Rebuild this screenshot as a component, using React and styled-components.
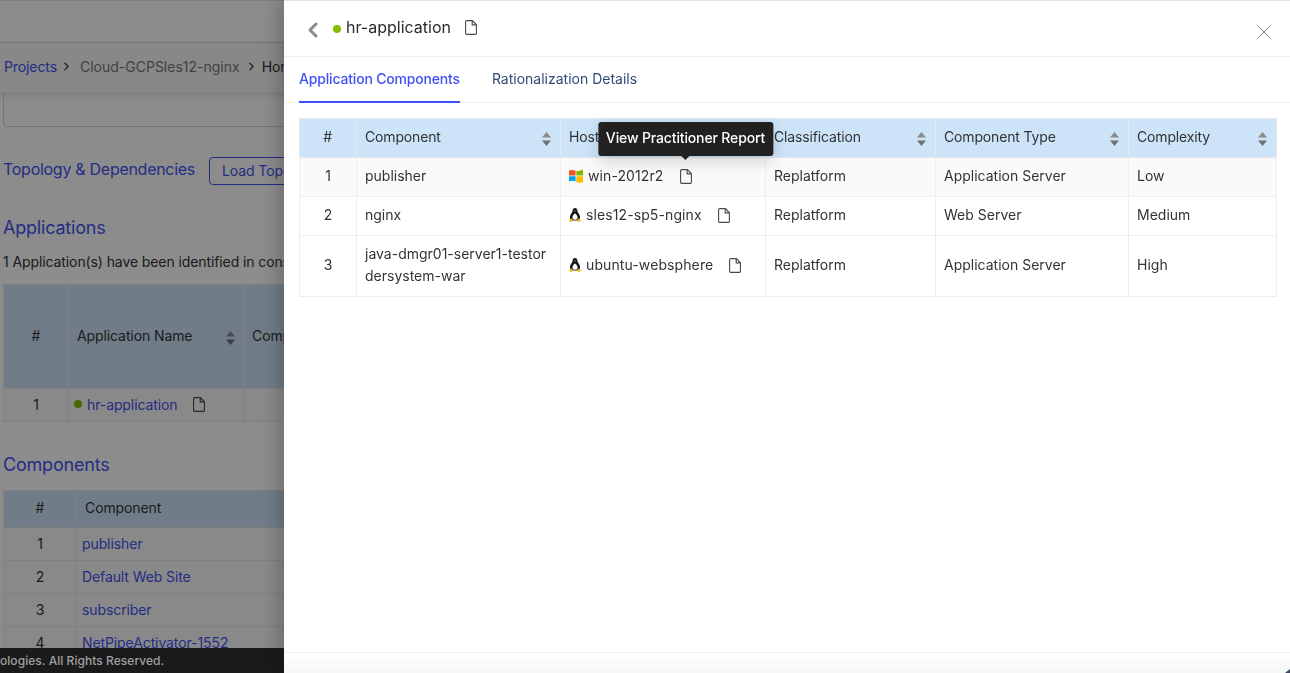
import styled, { createGlobalStyle } from "styled-components";
import { X, ChevronLeft, ChevronRight } from "lucide-react";

const GlobalStyle = createGlobalStyle`
    html, body {
        margin: 0;
        padding: 0;
        height: 100%;
        overflow: hidden;
        background: #ffffff;
        font-family: Inter, "Liberation Sans", sans-serif;
        font-size: 14px;
        color: #333333;
    }
    * {
        box-sizing: border-box;
    }
`;

const hosts = [
    { id: 1, name: "publisher", host: "win-2012r2", os: "windows", type: "Application Server", level: "Low" },
    { id: 2, name: "nginx", host: "sles12-sp5-nginx", os: "linux", type: "Web Server", level: "Medium" },
    { id: 3, name: "java-dmgr01-server1-testordersystem-war", host: "ubuntu-websphere", os: "linux", type: "Application Server", level: "High" },
];

const FileIcon = () => (
    <svg width="12" height="15" viewBox="0 0 12 15" fill="none" stroke="#4a4a4a" strokeWidth="1.1">
        <path d="M1.8 .6h5.6l4 4.2v8.4a1.2 1.2 0 0 1-1.2 1.2H1.8a1.2 1.2 0 0 1-1.2-1.2V1.8A1.2 1.2 0 0 1 1.8 .6z" />
        <path d="M7.2 .8v4.1h4" />
    </svg>
);

const SortIcon = () => (
    <SortWrap width="9" height="14" viewBox="0 0 9 14">
        <path d="M4.5 0L9 5.5H0z" fill="#8a8a8a" />
        <path d="M4.5 14L0 8.5h9z" fill="#6e6e6e" />
    </SortWrap>
);

const WindowsIcon = () => (
    <svg width="14" height="14" viewBox="0 0 14 14">
        <path d="M0 1.6C2 .9 4.400 .9 6.600 1.700V6.500H0z" fill="#f25022" />
        <path d="M7.300 1.700C9.400 2.300 11.800 2 14 .6V6.500H7.300z" fill="#7fba00" />
        <path d="M0 7.200H6.600V12.300C4.400 11.500 2 11.500 0 12.200z" fill="#00a4ef" />
        <path d="M7.300 7.200H14V13.200C11.800 13.900 9.400 13.900 7.300 12.900z" fill="#ffb900" />
    </svg>
);

const TuxIcon = () => (
    <svg width="12" height="14" viewBox="0 0 12 14">
        <path d="M6 0C4.300 0 3.500 1.400 3.600 3C3.700 4.300 1.400 6 1 8.400C.8 10 1.400 11.800 2.600 12.600H9.400C10.600 11.800 11.200 10 11 8.400C10.600 6 8.300 4.300 8.400 3C8.500 1.400 7.700 0 6 0z" fill="#161616" />
        <path d="M6 5.400C4.900 5.400 3.400 7.800 3.400 9.400C3.400 10.900 4.500 11.800 6 11.800C7.500 11.800 8.600 10.900 8.600 9.400C8.600 7.800 7.100 5.400 6 5.400z" fill="#fafafa" />
        <path d="M5 2.900L6 2.400L7 2.900L6 3.600z" fill="#f0b429" />
        <path d="M.3 11.400L2.500 10.400L4.400 12.800L2.400 14L.6 13.400z" fill="#f2b91d" />
        <path d="M11.700 11.400L9.500 10.400L7.600 12.800L9.600 14L11.400 13.400z" fill="#f2b91d" />
    </svg>
);

const App = () => {
    return (
        <Screen>
            <GlobalStyle />
            <Page>
                <TopBar />
                <Breadcrumb>
                    <CrumbLink>Projects</CrumbLink>
                    <ChevronRight size={13} strokeWidth={3} color="#555" />
                    <Crumb>Cloud-GCPSles12-nginx</Crumb>
                    <ChevronRight size={13} strokeWidth={3} color="#555" />
                    <CrumbCurrent>Home</CrumbCurrent>
                </Breadcrumb>
                <Content>
                    <EmptyCard />
                    <TopologyRow>
                        <SubTitle>Topology &amp; Dependencies</SubTitle>
                        <OutlineButton>Load Topology</OutlineButton>
                    </TopologyRow>
                    <SectionTitle>Applications</SectionTitle>
                    <Intro>1 Application(s) have been identified in cons</Intro>
                    <BackTable $width={440}>
                        <colgroup>
                            <col width="65" />
                            <col width="175" />
                            <col width="200" />
                        </colgroup>
                        <thead>
                            <tr>
                                <BackHead $height={104} $center>#</BackHead>
                                <BackHead $height={104}>
                                    <HeadInner>Application Name <SortIcon /></HeadInner>
                                </BackHead>
                                <BackHead $height={104}>Components</BackHead>
                            </tr>
                        </thead>
                        <tbody>
                            <tr>
                                <BackCell $center>1</BackCell>
                                <BackCell>
                                    <NameLine>
                                        <Dot />
                                        <BackLink>hr-application</BackLink>
                                        <FileIcon />
                                    </NameLine>
                                </BackCell>
                                <BackCell />
                            </tr>
                        </tbody>
                    </BackTable>
                    <ComponentsTitle>Components</ComponentsTitle>
                    <BackTable $width={473}>
                        <colgroup>
                            <col width="73" />
                            <col width="400" />
                        </colgroup>
                        <thead>
                            <tr>
                                <BackHead $height={37} $center>#</BackHead>
                                <BackHead $height={37}>Component</BackHead>
                            </tr>
                        </thead>
                        <tbody>
                            {["publisher", "Default Web Site", "subscriber", "NetPipeActivator-1552"].map((item, index) => (
                                <tr key={item}>
                                    <BackCell $center>{index + 1}</BackCell>
                                    <BackCell><BackLink>{item}</BackLink></BackCell>
                                </tr>
                            ))}
                        </tbody>
                    </BackTable>
                </Content>
            </Page>
            <Scrim />
            <Footer>
                <FooterText>ologies. All Rights Reserved.</FooterText>
            </Footer>
            <Drawer>
                <DrawerHeader>
                    <TitleGroup>
                        <BackArrow><ChevronLeft size={24} strokeWidth={3} color="#8a8a8a" /></BackArrow>
                        <TitleDot />
                        <DrawerTitle>hr-application</DrawerTitle>
                        <TitleFile><FileIcon /></TitleFile>
                    </TitleGroup>
                    <CloseButton><X size={24} strokeWidth={1} color="#808080" /></CloseButton>
                </DrawerHeader>
                <Tabs>
                    <Tab $active>Application Components</Tab>
                    <Tab>Rationalization Details</Tab>
                </Tabs>
                <DrawerBody>
                    <HostTable>
                        <colgroup>
                            <col width="57" />
                            <col width="204" />
                            <col width="205" />
                            <col width="170" />
                            <col width="193" />
                            <col width="148" />
                        </colgroup>
                        <thead>
                            <tr>
                                <Head $center>#</Head>
                                <Head><HeadInner>Component <SortIcon /></HeadInner></Head>
                                <Head><HeadInner>Host <SortIcon /></HeadInner></Head>
                                <Head><HeadInner>Classification <SortIcon /></HeadInner></Head>
                                <Head><HeadInner>Component Type <SortIcon /></HeadInner></Head>
                                <Head><HeadInner>Complexity <SortIcon /></HeadInner></Head>
                            </tr>
                        </thead>
                        <tbody>
                            {hosts.map((row) => (
                                <Row key={row.id} $hover={row.id === 1}>
                                    <Cell $center>{row.id}</Cell>
                                    <Cell>{row.name}</Cell>
                                    <Cell>
                                        <HostLine>
                                            {row.os === "windows" ? <WindowsIcon /> : <TuxIcon />}
                                            <HostName>{row.host}</HostName>
                                            <ReportButton>
                                                <FileIcon />
                                                {row.id === 1 && (
                                                    <Tooltip>View Practitioner Report</Tooltip>
                                                )}
                                            </ReportButton>
                                        </HostLine>
                                    </Cell>
                                    <Cell>Replatform</Cell>
                                    <Cell>{row.type}</Cell>
                                    <Cell>{row.level}</Cell>
                                </Row>
                            ))}
                        </tbody>
                    </HostTable>
                </DrawerBody>
                <DrawerFooter />
            </Drawer>
        </Screen>
    );
};

export default App;

const Screen = styled.div`
    position: relative;
    width: 1290px;
    height: 673px;
    overflow: hidden;
`;

const Page = styled.div`
    width: 1290px;
    height: 673px;
    overflow: hidden;
    background: #ffffff;
    letter-spacing: -0.1px;
`;

const TopBar = styled.div`
    height: 43px;
    border-top: 1px solid #e4e4e4;
    border-bottom: 1px solid #dcdcdc;
    background: #ffffff;
`;

const Breadcrumb = styled.div`
    height: 49px;
    padding: 0 0 2px 4px;
    display: flex;
    align-items: center;
    gap: 3px;
    white-space: nowrap;
    background: #f7f7f7;
    box-shadow: 0 3px 8px rgba(0, 0, 0, 0.12);
    position: relative;
`;

const CrumbLink = styled.span`
    color: #4353f0;
`;

const Crumb = styled.span`
    color: #777777;
    letter-spacing: 0;
    margin: 0 2px 0 4px;
`;

const CrumbCurrent = styled.span`
    color: #333333;
    margin-left: 1px;
`;

const Content = styled.div`
    width: 284px;
    padding: 0 0 0 3px;
    overflow: hidden;
`;

const EmptyCard = styled.div`
    height: 35px;
    width: 400px;
    border: 1px solid #d6d6d6;
    border-top: none;
    border-radius: 0 0 4px 4px;
`;

const TopologyRow = styled.div`
    margin-top: 30px;
    display: flex;
    align-items: center;
    gap: 14px;
    height: 28px;
    width: 400px;
`;

const SubTitle = styled.div`
    font-size: 16px;
    letter-spacing: -0.28px;
    margin-bottom: 5px;
    color: #4353f0;
`;

const OutlineButton = styled.div`
    height: 28px;
    padding: 0 12px 2px;
    display: flex;
    align-items: center;
    white-space: nowrap;
    border: 1px solid #4353f0;
    border-radius: 4px;
    color: #4353f0;
`;

const SectionTitle = styled.div`
    margin-top: 31px;
    height: 24px;
    line-height: 24px;
    font-size: 18px;
    letter-spacing: -0.2px;
    color: #4353f0;
`;

const ComponentsTitle = styled(SectionTitle)`
    margin-top: 31px;
    margin-bottom: 13px;
`;

const Intro = styled.div`
    margin-top: 13px;
    margin-bottom: 13px;
    height: 18px;
    line-height: 18px;
    white-space: nowrap;
    color: #333333;
`;

const BackTable = styled.table`
    width: ${(props) => props.$width}px;
    border-collapse: collapse;
    table-layout: fixed;
`;

const BackHead = styled.th`
    height: ${(props) => props.$height}px;
    padding: 0 8px 3px;
    font-weight: 400;
    background: #cce3f8;
    border: 1px solid #e8e8e8;
    text-align: ${(props) => (props.$center ? "center" : "left")};
    color: #333333;
`;

const BackCell = styled.td`
    height: 33px;
    padding: 0 5px 2px;
    background: #fafafa;
    border: 1px solid #e8e8e8;
    text-align: ${(props) => (props.$center ? "center" : "left")};
    white-space: nowrap;
`;

const BackLink = styled.span`
    color: #4353f0;
`;

const NameLine = styled.div`
    display: flex;
    align-items: center;
    gap: 5px;
    & > svg {
        margin-left: 11px;
    }
`;

const Dot = styled.span`
    width: 8px;
    height: 8px;
    border-radius: 50%;
    background: #84bc00;
`;

const Scrim = styled.div`
    position: absolute;
    inset: 0;
    background: rgba(0, 0, 0, 0.45);
    backdrop-filter: blur(0.6px);
`;

const Footer = styled.div`
    position: absolute;
    left: 0;
    bottom: 0;
    width: 284px;
    height: 25px;
    padding-bottom: 1px;
    background: #1a1a1a;
    display: flex;
    align-items: center;
    overflow: hidden;
`;

const FooterText = styled.span`
    font-size: 12px;
    font-weight: 500;
    letter-spacing: 0.05px;
    color: #a0a0a0;
    white-space: nowrap;
`;

const Drawer = styled.div`
    position: absolute;
    top: 0;
    right: 0;
    bottom: 0;
    width: 1006px;
    display: flex;
    flex-direction: column;
    background: #ffffff;
    border-top: 1px solid #e4e4e4;
    box-shadow: -6px 0 16px rgba(0, 0, 0, 0.2);
`;

const DrawerHeader = styled.div`
    height: 56px;
    flex: none;
    padding: 0 14px 0 17px;
    display: flex;
    align-items: center;
    justify-content: space-between;
    border-bottom: 1px solid #eeeeee;
`;

const TitleGroup = styled.div`
    display: flex;
    align-items: center;
    gap: 5px;
`;

const BackArrow = styled.span`
    display: inline-flex;
    margin: 3px 3px 0 0;
`;

const TitleFile = styled.span`
    display: inline-flex;
    margin: 0 0 2px 9px;
`;

const CloseButton = styled.span`
    display: inline-flex;
    margin-top: 7px;
`;

const TitleDot = styled(Dot)`
    background: #84bc00;
`;

const DrawerTitle = styled.div`
    font-size: 16px;
    margin-bottom: 4px;
    color: #2b2b2b;
`;

const Tabs = styled.div`
    height: 46px;
    flex: none;
    padding-left: 15px;
    display: flex;
    gap: 32px;
    border-bottom: 1px solid #eeeeee;
`;

const Tab = styled.div`
    height: 46px;
    line-height: 44px;
    font-weight: ${(props) => (props.$active ? 500 : 400)};
    letter-spacing: ${(props) => (props.$active ? "-0.18px" : "0")};
    color: ${(props) => (props.$active ? "#3f51f5" : "#2f4a7a")};
    border-bottom: 2px solid ${(props) => (props.$active ? "#3f51f5" : "transparent")};
`;

const DrawerBody = styled.div`
    flex: 1;
    padding: 15px 13px 0 15px;
`;

const HostTable = styled.table`
    width: 977px;
    border-collapse: collapse;
    table-layout: fixed;
`;

const Head = styled.th`
    height: 39px;
    padding: 0 9px 4px 8px;
    font-weight: 400;
    letter-spacing: -0.15px;
    background: #cce3f8;
    border: 1px solid #e8e8e8;
    text-align: ${(props) => (props.$center ? "center" : "left")};
    color: #333333;
`;

const HeadInner = styled.div`
    display: flex;
    align-items: center;
    justify-content: space-between;
`;

const SortWrap = styled.svg`
    flex: none;
    margin-top: 5px;
`;

const Row = styled.tr`
    background: ${(props) => (props.$hover ? "#fafafa" : "#ffffff")};
`;

const Cell = styled.td`
    height: 39px;
    padding: 7px 8px 9px;
    line-height: 22px;
    border: 1px solid #eeeeee;
    text-align: ${(props) => (props.$center ? "center" : "left")};
    color: #333333;
    word-break: break-all;
`;

const HostLine = styled.div`
    display: flex;
    align-items: center;
    gap: 5px;
`;

const HostName = styled.span`
    white-space: nowrap;
    letter-spacing: 0.1px;
`;

const ReportButton = styled.span`
    position: relative;
    margin-left: 11px;
    display: inline-flex;
`;

const Tooltip = styled.div`
    position: absolute;
    left: 50%;
    bottom: 28px;
    transform: translateX(-50%);
    height: 34px;
    padding: 0 8px 2px;
    display: flex;
    align-items: center;
    white-space: nowrap;
    font-weight: 500;
    letter-spacing: -0.14px;
    color: #ffffff;
    background: #212121;
    border-radius: 3px;
    box-shadow: 0 6px 16px rgba(0, 0, 0, 0.15);
    &::after {
        content: "";
        position: absolute;
        left: 50%;
        bottom: -4px;
        margin-left: -4px;
        border-style: solid;
        border-width: 4px 4px 0;
        border-color: #212121 transparent transparent;
    }
`;

const DrawerFooter = styled.div`
    height: 21px;
    flex: none;
    position: relative;
    border-top: 1px solid #eeeeee;
    background: linear-gradient(#ffffff, #f6f6f6);
    &::after {
        content: "";
        position: absolute;
        right: 0;
        bottom: 0;
        border-style: solid;
        border-width: 0 0 4px 5px;
        border-color: transparent transparent #3c4a5c;
    }
`;
